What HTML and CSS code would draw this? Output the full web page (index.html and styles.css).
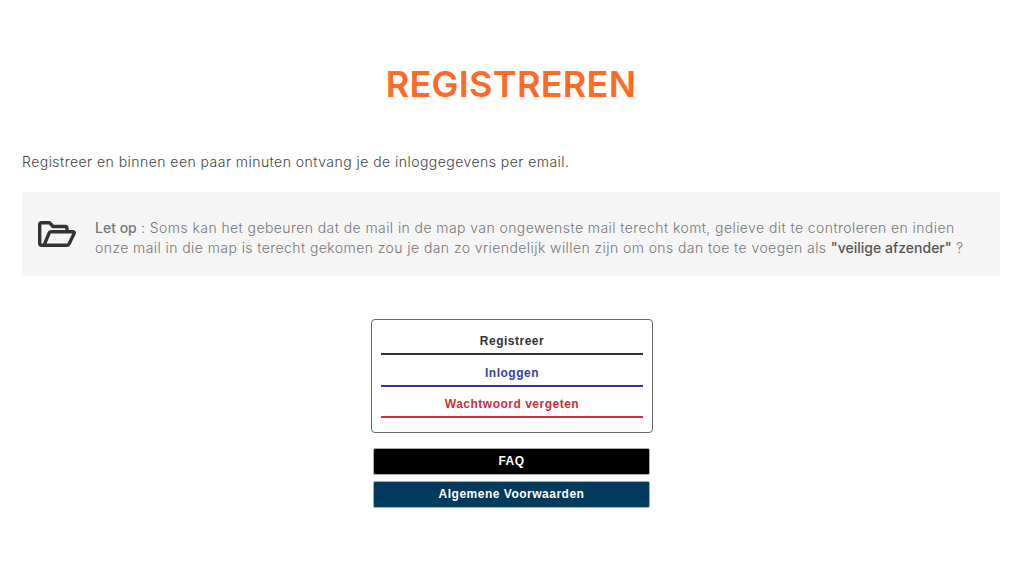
FILE: index.html
```html
<!DOCTYPE html>
<html lang="nl">
<head>
    <meta charset="UTF-8">
    <title>Registreren</title>
    <link rel="stylesheet" href="styles.css">
</head>
<body>
    <div class="container">
        <h1>REGISTREREN</h1>
        <p class="intro">Registreer en binnen een paar minuten ontvang je de inloggegevens per email.</p>

        <div class="notice">
            <svg class="notice-icon" viewBox="0 0 38 26" fill="none" stroke="#333" stroke-width="3.4" stroke-linejoin="round" stroke-linecap="round">
                <path d="M6 24.300H3.500Q1.700 24.300 1.700 22.500V3.500Q1.700 1.700 3.500 1.700H11.500L15 5.500H27Q29 5.500 29 7.500V10.500"/>
                <path d="M6 24.300L11 12.300Q11.500 10.800 13 10.800H34.500Q37 10.800 36 12.800L31 23Q30.300 24.300 28.500 24.300Z"/>
            </svg>
            <p class="notice-text"><strong>Let op</strong> : Soms kan het gebeuren dat de mail in de map van ongewenste mail terecht komt, gelieve dit te controleren en indien onze mail in die map is terecht gekomen zou je dan zo vriendelijk willen zijn om ons dan toe te voegen als <strong class="dark">"veilige afzender"</strong> ?</p>
        </div>
    </div>

    <div class="actions">
        <div class="link-card">
            <a href="#" class="link link-black">Registreer</a>
            <a href="#" class="link link-blue">Inloggen</a>
            <a href="#" class="link link-red">Wachtwoord vergeten</a>
        </div>
        <a href="#" class="btn btn-black">FAQ</a>
        <a href="#" class="btn btn-navy">Algemene Voorwaarden</a>
    </div>
</body>
</html>
```

FILE: styles.css
```css
* {
    margin: 0;
    padding: 0;
    box-sizing: border-box;
}

body {
    font-family: "Inter", "Noto Sans", sans-serif;
    background: white;
    color: #555;
}

.container {
    padding: 62px 24px 0 22px;
}

h1 {
    color: #ff6a24;
    font-size: 36px;
    line-height: 44px;
    font-weight: 600;
    letter-spacing: 0.3px;
    text-align: center;
}

.intro {
    margin-top: 46px;
    font-size: 14px;
    line-height: 20px;
    font-weight: 300;
    letter-spacing: 0.46px;
    color: #444;
}

.notice {
    margin-top: 20px;
    height: 84px;
    display: flex;
    align-items: center;
    gap: 19px;
    padding: 0 24px 0 16px;
    background: #f5f5f5;
    border-radius: 3px;
}

.notice-icon {
    width: 38px;
    height: 26px;
    flex-shrink: 0;
}

.notice-text {
    padding-top: 8px;
    font-size: 14px;
    line-height: 20px;
    font-weight: 300;
    letter-spacing: 0.42px;
    color: #777;
}

.notice-text strong {
    font-weight: 500;
    letter-spacing: 0;
}

.notice-text .dark {
    color: #555;
}

.actions {
    width: 282px;
    margin: 43px auto 0;
    display: flex;
    flex-direction: column;
    align-items: flex-start;
    font-family: "Liberation Sans", Arial, sans-serif;
    font-size: 12px;
    font-weight: bold;
    letter-spacing: 0.5px;
}

.link-card {
    width: 282px;
    height: 114px;
    padding: 3.500px 9px 0;
    background: white;
    border: 1px solid #666;
    border-radius: 4px;
    margin-bottom: 15px;
}

.link {
    display: block;
    height: 31.500px;
    padding-top: 7.500px;
    line-height: 20px;
    text-align: center;
    text-decoration: none;
    border-bottom: 2px solid;
}

.link-black {
    color: #333;
    border-color: #333;
}

.link-blue {
    color: #3b3f9e;
    border-color: #2e3a94;
}

.link-red {
    color: #c9303a;
    border-color: #c9303a;
}

.btn {
    display: block;
    width: 277px;
    height: 27px;
    margin: 0 0 6px 2px;
    line-height: 25px;
    text-align: center;
    color: white;
    text-decoration: none;
    border: 1px solid #aaa;
    border-radius: 2px;
}

.btn-black {
    background: black;
}

.btn-navy {
    background: #023a5e;
}
```
